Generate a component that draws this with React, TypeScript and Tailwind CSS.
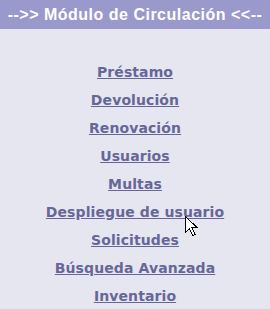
import React from 'react';

const links = [
  'Préstamo',
  'Devolución',
  'Renovación',
  'Usuarios',
  'Multas',
  'Despliegue de usuario',
  'Solicitudes',
  'Búsqueda Avanzada',
  'Inventario',
];

const Cursor = () => (
  <svg
    className="absolute left-[185px] top-[216px]"
    width="13"
    height="21"
    viewBox="0 0 13 21"
    shapeRendering="crispEdges"
  >
    <path
      d="M0.5 0.5 L0.5 16.5 L4.5 12.5 L7.5 19.5 L10 18.5 L7 11.5 L12 11.5 Z"
      fill="#ffffff"
      stroke="#000000"
      strokeWidth="1"
    />
  </svg>
);

export default function App() {
  return (
    <div className="relative h-[309px] w-[270px] overflow-hidden bg-[#e6e6f0] font-['DejaVu_Sans',sans-serif]">
      <div className="flex h-[29px] items-center justify-center whitespace-nowrap bg-[#9999cc] font-['Liberation_Sans',Arial,sans-serif] text-[16px] font-bold tracking-[0.5px] text-white">
        --&gt;&gt; Módulo de Circulación &lt;&lt;--
      </div>
      <ul className="flex flex-col items-center pt-[29px]">
        {links.map((label) => (
          <li key={label} className="flex h-[28px] items-center">
            <a href="#" className="text-[14px] font-bold tracking-[0.1px] text-[#666699] underline">
              {label}
            </a>
          </li>
        ))}
      </ul>
      <Cursor />
    </div>
  );
}
